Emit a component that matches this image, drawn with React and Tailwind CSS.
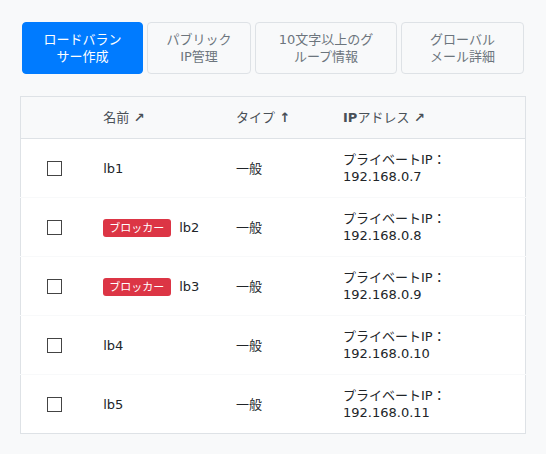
import React, { useState } from 'react';
import clsx from 'clsx';

const tabs = [
  { id: 'create', label: 'ロードバランサー作成' },
  { id: 'ip', label: 'パブリックIP管理' },
  { id: 'group', label: '10文字以上のグループ情報' },
  { id: 'mail', label: 'グローバルメール詳細' },
];

const columns = [
  { key: 'name', label: '名前', arrow: '↗' },
  { key: 'type', label: 'タイプ', arrow: '↑' },
  { key: 'ip', prefix: 'IP', label: 'アドレス', arrow: '↗' },
];

const rows = [
  { name: 'lb1', type: '一般', ip: '192.168.0.7' },
  { name: 'lb2', type: '一般', ip: '192.168.0.8', blocker: true },
  { name: 'lb3', type: '一般', ip: '192.168.0.9', blocker: true },
  { name: 'lb4', type: '一般', ip: '192.168.0.10' },
  { name: 'lb5', type: '一般', ip: '192.168.0.11' },
];

const TabBar = ({ active, onChange }) => (
  <nav className="grid grid-cols-[121fr_104fr_142fr_123fr] gap-1 p-0.5">
    {tabs.map((tab) => (
      <button
        key={tab.id}
        type="button"
        onClick={() => onChange(tab.id)}
        className={clsx(
          'rounded border px-4 py-2 text-center [line-break:strict] cursor-pointer',
          active === tab.id
            ? 'bg-[#007bff] border-[#007bff] text-white'
            : 'bg-[#f8f9fa] border-[#dee2e6] text-[#6c757d]'
        )}
      >
        {tab.label}
      </button>
    ))}
  </nav>
);

const BalancerTable = () => {
  const [selected, setSelected] = useState([]);

  const toggle = (name) => {
    setSelected((prev) =>
      prev.includes(name) ? prev.filter((n) => n !== name) : [...prev, name]
    );
  };

  return (
    <table className="w-full table-fixed border-collapse border border-[#dee2e6] bg-white">
      <colgroup>
        <col className="w-[13.2%]" />
        <col className="w-[26.3%]" />
        <col className="w-[21.2%]" />
        <col />
      </colgroup>
      <thead>
        <tr className="border-b border-[#dee2e6] bg-[#f8f9fa] text-[#495057]">
          <td />
          {columns.map((col) => (
            <th key={col.key} scope="col" className="px-4 py-3 text-left font-semibold">
              {col.prefix}
              <span className="font-normal">{col.label}</span> {col.arrow}
            </th>
          ))}
        </tr>
      </thead>
      <tbody>
        {rows.map((row) => (
          <tr key={row.name} className="border-b border-[#f8f9fa] last:border-[#dee2e6]">
            <td className="py-3 text-center">
              <input
                type="checkbox"
                aria-label={row.name}
                checked={selected.includes(row.name)}
                onChange={() => toggle(row.name)}
                className="block mx-auto size-[15px] appearance-none border border-[#444444] bg-white checked:bg-[#007bff]"
              />
            </td>
            <td className="px-4 py-3">
              {row.blocker && (
                <span className="mt-0.5 mr-2 inline-block rounded-[3px] bg-[#dc3545] pt-[3px] pr-[7px] pb-px pl-1.5 text-[11px] leading-[14px] text-white">
                  ブロッカー
                </span>
              )}
              {row.name}
            </td>
            <td className="px-4 py-3">{row.type}</td>
            <td className="px-4 py-3">プライベートIP：{row.ip}</td>
          </tr>
        ))}
      </tbody>
    </table>
  );
};

const App = () => {
  const [active, setActive] = useState('create');

  return (
    <div
      lang="ja"
      className="min-h-screen bg-[#f8f9fa] p-5 font-['DejaVu_Sans','Noto_Sans_CJK_JP',sans-serif] text-[13px] leading-[17px] text-[#212529]"
    >
      <div className="flex flex-col gap-5">
        <TabBar active={active} onChange={setActive} />
        <BalancerTable />
      </div>
    </div>
  );
};

export default App;
